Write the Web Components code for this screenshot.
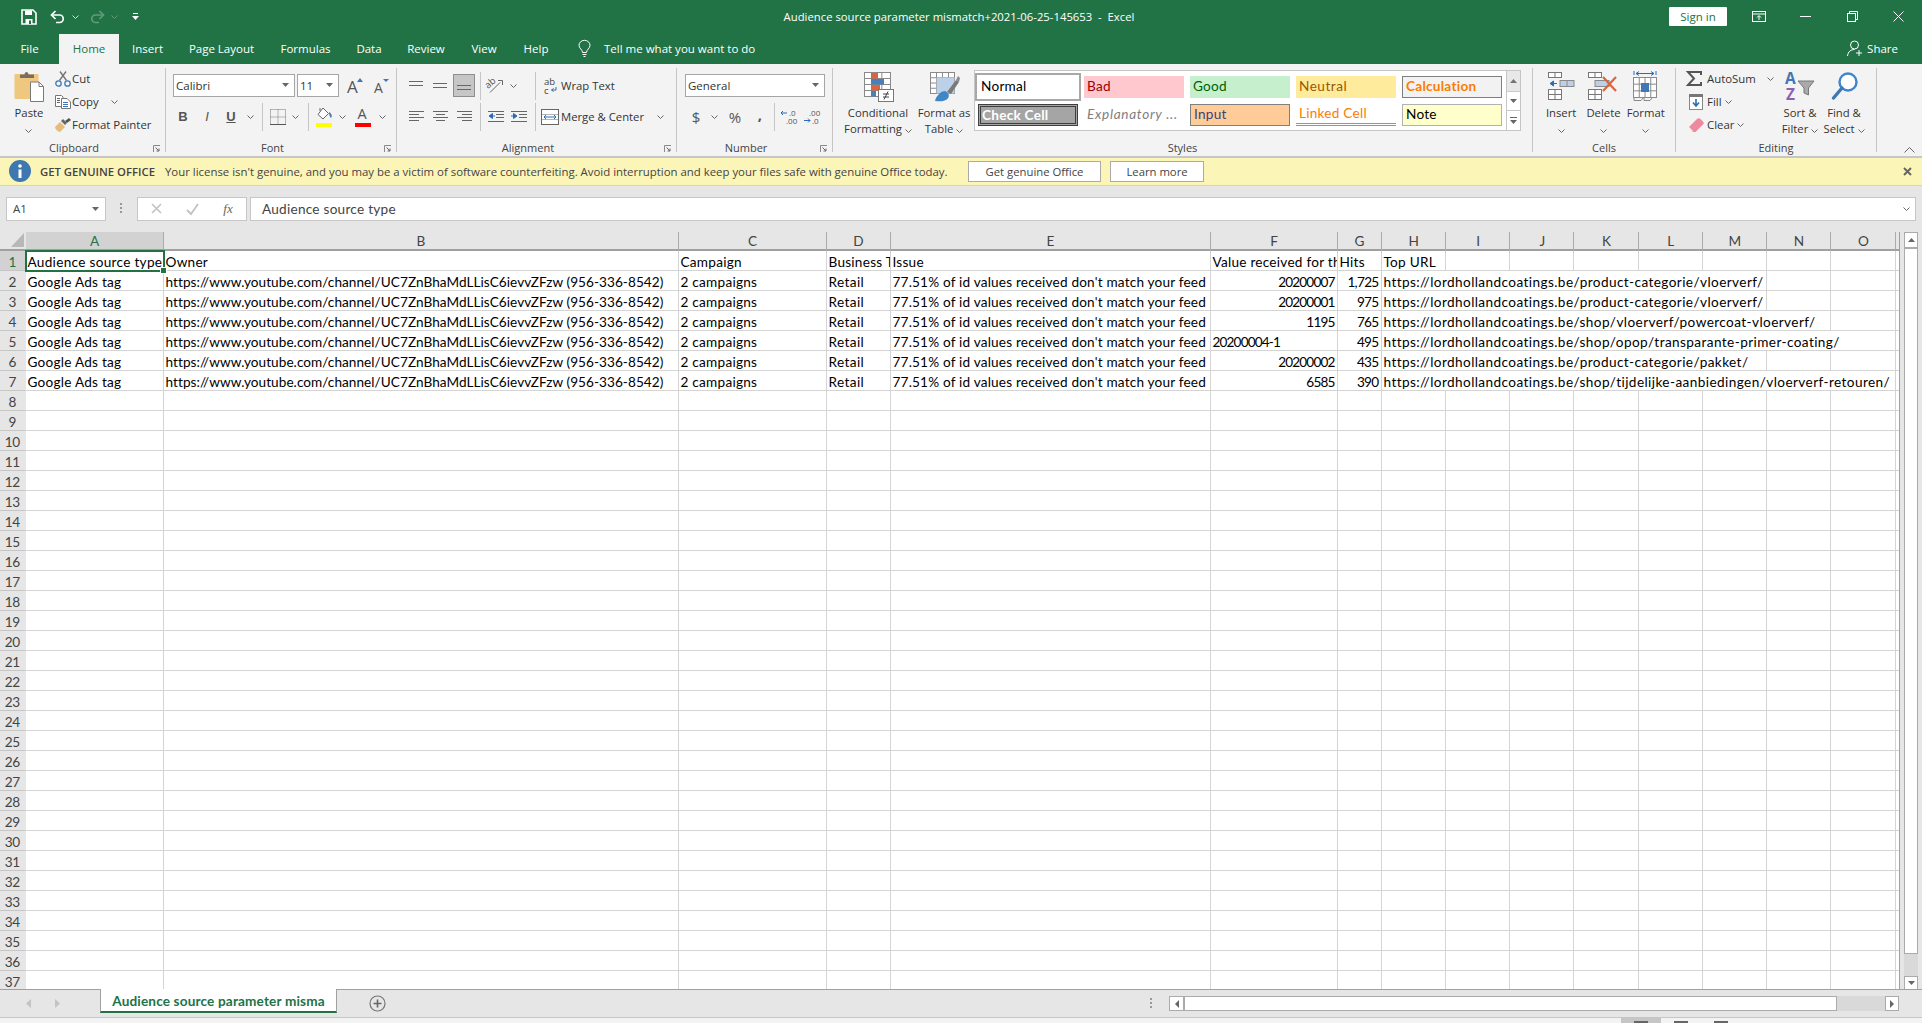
<!DOCTYPE html>
<html>
<head>
<meta charset="utf-8">
<title>Excel</title>
<style>
:root { --ui: "Open Sans", "Noto Sans", sans-serif; --cell: Lato, "Liberation Sans", sans-serif; --green: #217346; }
html, body { margin: 0; height: 100%; overflow: hidden; background: #e6e6e6; }
body { font: 11.5px var(--ui); color: #333; }
</style>
</head>
<body>
<xl-app></xl-app>
<script>
// every icon is [width, height, svg content]
const L = (x1, y1, x2, y2, c = "#666", w = 1) => `<line x1="${x1}" y1="${y1}" x2="${x2}" y2="${y2}" stroke="${c}" stroke-width="${w}"/>`;
const lines = (rows) => rows.map(([x1, x2, y, c]) => L(x1, y + .5, x2, y + .5, c || "#666")).join("");
const gridBox = (x, y, w, h, cols, rows, c = "#777") => {
  let s = `<rect x="${x + .5}" y="${y + .5}" width="${w - 1}" height="${h - 1}" fill="#fff" stroke="${c}"/>`;
  for (let i = 1; i < cols; i++) s += L(x + .5 + i * (w - 1) / cols, y, x + .5 + i * (w - 1) / cols, y + h, c);
  for (let i = 1; i < rows; i++) s += L(x, y + .5 + i * (h - 1) / rows, x + w, y + .5 + i * (h - 1) / rows, c);
  return s;
};
const ICONS = {
  chev: [7, 4, `<path d="M.5 .5 3.5 3.5 6.5 .5" fill="none" stroke="#666"/>`],
  tri: [8, 4, `<path d="M0 0H8L4 4Z" fill="#555"/>`],
  save: [16, 16, `<path d="M1 1H12L15 4V15H1Z" fill="none" stroke="#fff" stroke-width="1.6"/><path d="M4 1.5H11V6H4ZM4.5 10H11.5V15H4.5Z" fill="#fff"/><rect x="8" y="11.5" width="2" height="3.5" fill="#217346"/>`],
  undo: [15, 14, `<path d="M5.5 1 1.5 5 5.5 9" fill="none" stroke="#fff" stroke-width="1.7"/><path d="M2 5H9.5A3.7 3.7 0 0 1 9.5 12.5H6" fill="none" stroke="#fff" stroke-width="1.7"/>`],
  redo: [15, 14, `<path d="M9.5 1 13.5 5 9.5 9" fill="none" stroke="#5f9c7c" stroke-width="1.7"/><path d="M13 5H5.5A3.7 3.7 0 0 0 5.5 12.5H9" fill="none" stroke="#5f9c7c" stroke-width="1.7"/>`],
  chevw: [7, 4, `<path d="M.5 .5 3.5 3.5 6.5 .5" fill="none" stroke="#cfe3d8"/>`],
  chevd: [7, 4, `<path d="M.5 .5 3.5 3.5 6.5 .5" fill="none" stroke="#5f9c7c"/>`],
  qat: [7, 8, `<path d="M1 .5H6" stroke="#fff"/><path d="M0 3H7L3.5 7Z" fill="#fff"/>`],
  display: [14, 11, `<rect x=".5" y=".5" width="13" height="10" fill="none" stroke="#fff"/><path d="M0 3H14" stroke="#fff"/><path d="M7 9V5M5 6.5 7 4.5 9 6.5" fill="none" stroke="#fff"/>`],
  min: [11, 1, `<rect width="11" height="1" fill="#fff"/>`],
  restore: [11, 11, `<rect x=".5" y="2.5" width="8" height="8" fill="none" stroke="#fff"/><path d="M2.5 2.5V.5H10.5V8.5H8.5" fill="none" stroke="#fff"/>`],
  close: [11, 11, `<path d="M.5 .5 10.5 10.5M10.5 .5 .5 10.5" stroke="#fff"/>`],
  bulb: [13, 17, `<path d="M4.5 12.5C4.5 9.5 1 8.5 1 5.3A5.5 5 0 0 1 12 5.3C12 8.5 8.5 9.5 8.5 12.5Z" fill="none" stroke="#fff"/><path d="M4.5 14.5H8.5M5.5 16.5H7.5" stroke="#fff"/>`],
  share: [16, 17, `<circle cx="7.5" cy="5" r="4" fill="none" stroke="#fff"/><path d="M.5 16C1 11.5 4 9.5 7.5 9.5" fill="none" stroke="#fff"/><path d="M12 10V16M9 13H15" stroke="#fff"/>`],
  paste: [30, 31, `<rect x=".5" y="3" width="24" height="25" rx="1" fill="#edc87e"/><path d="M6 7V3.5H10.5C10.5 0 14.5 0 14.5 3.5H20V7Z" fill="#7b6d60"/><path d="M16.5 11H25L29.5 15.5V30.5H16.5Z" fill="#fff" stroke="#7a7a7a"/><path d="M25 11V15.5H29.5" fill="none" stroke="#7a7a7a"/>`],
  cut: [16, 16, `<path d="M4.5 9.5 11 .5M11.5 9.5 5 .5" stroke="#777" stroke-width="1.4"/><circle cx="3.5" cy="12.5" r="2.7" fill="none" stroke="#3f78b5" stroke-width="1.3"/><circle cx="12.5" cy="12.5" r="2.7" fill="none" stroke="#3f78b5" stroke-width="1.3"/>`],
  copy: [16, 14, `<path d="M.5 .5H6.5L8 2V11.5H.5Z" fill="#fff" stroke="#777"/><path d="M6.5 3.5H12L15.5 7V13.5H6.5Z" fill="#fff" stroke="#777"/>` + lines([[2, 5, 3], [2, 5, 5], [2, 5, 7], [8, 13, 7, "#3f78b5"], [8, 13, 9, "#3f78b5"], [8, 13, 11, "#3f78b5"]])],
  painter: [16, 14, `<path d="M0 9 5 4 10 9 5 14C3 14 0 11 0 9Z" fill="#e5bd78"/><path d="M6 3 8 1 12 5 10 7Z" fill="#666"/><path d="M10 3 14 0 16 2 12 5Z" fill="#555"/>`],
  grow: [17, 16, `<text x="0" y="15" font-size="17" fill="#555">A</text><path d="M10 4 13 0 16 4Z" fill="#3f78b5"/>`],
  shrink: [17, 16, `<text x="1" y="15" font-size="14" fill="#555">A</text><path d="M10 1H16L13 4Z" fill="#3f78b5"/>`],
  border: [16, 16, `<path d="M.5 .5H15.5V15.5M.5 .5V15.5M8 .5V15.5M.5 8H15.5" fill="none" stroke="#777" stroke-dasharray="1 1"/><path d="M0 15.5H16" stroke="#555"/>`],
  fill: [17, 17, `<path d="M7 1 12.5 6.5 7 12 2 7.5Z" fill="#fff" stroke="#666"/><path d="M13 5C15.5 6.5 16.5 9 15 11 13.5 9.5 13 7 13 5Z" fill="#3f78b5"/><path d="M4 1V4" stroke="#666"/>`],
  acolor: [16, 17, `<text x="2.5" y="12" font-size="14.5" fill="#555">A</text>`],
  atop: [14, 12, lines([[0, 14, 1], [0, 14, 5]])],
  amid: [14, 12, lines([[0, 14, 3], [0, 14, 7]])],
  abot: [14, 12, lines([[0, 14, 5], [0, 14, 9]])],
  aleft: [15, 12, lines([[0, 15, 0], [0, 10, 3], [0, 15, 6], [0, 10, 9]])],
  acenter: [15, 12, lines([[0, 15, 0], [3, 12, 3], [0, 15, 6], [3, 12, 9]])],
  aright: [15, 12, lines([[0, 15, 0], [5, 15, 3], [0, 15, 6], [5, 15, 9]])],
  outdent: [16, 12, lines([[0, 16, 0], [8, 16, 3], [8, 16, 6], [0, 16, 10]]) + `<path d="M7 5H3M4.5 2.5 1 5 4.5 7.5Z" fill="#2a6db0" stroke="#2a6db0"/>`],
  indent: [16, 12, lines([[0, 16, 0], [8, 16, 3], [8, 16, 6], [0, 16, 10]]) + `<path d="M0 5H4M2.5 2.5 6 5 2.5 7.5Z" fill="#2a6db0" stroke="#2a6db0"/>`],
  orient: [17, 15, `<text transform="translate(1 11) rotate(-40)" font-size="9.5" fill="#555">ab</text><path d="M3 14.5 13 4.5" stroke="#666"/><path d="M11 2.5H15.5V7" fill="none" stroke="#666"/>`],
  wrap: [15, 17, `<text x="1" y="8" font-size="9.5" fill="#444">ab</text><text x="1" y="16.5" font-size="9.5" fill="#444">c</text><path d="M13 10V13H8.5M10.5 11.5 8.5 13 10.5 14.5" fill="none" stroke="#2a6db0"/>`],
  merge: [18, 16, gridBox(0, 0, 18, 16, 1, 3, "#666") + `<rect x="1" y="5.5" width="16" height="5" fill="#fff"/><path d="M3 8H15M5 6 3 8 5 10M13 6 15 8 13 10" fill="none" stroke="#2a6db0"/>`],
  decinc: [20, 15, `<text x="9" y="7" font-size="8" fill="#555">.0</text><text x="6" y="14.5" font-size="8" fill="#555">.00</text><path d="M7 4H1M3 2 1 4 3 6" fill="none" stroke="#2a6db0"/>`],
  decdec: [20, 15, `<text x="6" y="7" font-size="8" fill="#555">.00</text><text x="9" y="14.5" font-size="8" fill="#555">.0</text><path d="M1 11.5H7M5 9.5 7 11.5 5 13.5" fill="none" stroke="#2a6db0"/>`],
  launch: [7, 7, `<path d="M.5 7V.5H7" fill="none" stroke="#888"/><path d="M2.5 2.5 6 6M6 3.5V6H3.5" fill="none" stroke="#666"/>`],
  cf: [31, 31, gridBox(1, 1, 27, 25, 3, 4, "#8a8a8a") + `<rect x="8" y="2" width="7" height="5.5" fill="#d9643e"/><rect x="8" y="8" width="13" height="5.5" fill="#4a7fba"/><rect x="8" y="14" width="9" height="5.5" fill="#d9643e"/><rect x="8" y="20" width="5" height="5.5" fill="#4a7fba"/><rect x="15.5" y="18.5" width="15" height="12" fill="#fff" stroke="#777"/>` + L(20, 23, 26, 23, "#444") + L(20, 26, 26, 26, "#444") + L(21, 28.5, 25, 20.5, "#444")],
  table: [31, 31, gridBox(1, 1, 25, 22, 4, 4, "#8a8a8a") + `<rect x="7.5" y="6.5" width="18" height="16" fill="#bcd0e8"/><path d="M18 21 27 9 30 11 22 23Z" fill="#7a7a7a"/><path d="M27 9 29 5 31 7 30 11Z" fill="#8a8a8a"/><path d="M6 30C7 25 12 20 16 20 21 22 21 27 17 29 13 31 9 30 6 30Z" fill="#3f86c8"/>`],
  ins: [26, 28, gridBox(0, 0, 14, 6, 2, 1) + gridBox(0, 17, 14, 11, 2, 2) + `<rect x="12" y="8.5" width="14" height="6" fill="#bcd0e8" stroke="#8a8a8a"/>` + L(19, 8, 19, 15, "#8a8a8a") + `<path d="M9 11.5H3M5.5 9 2 11.5 5.5 14Z" fill="#2a6db0" stroke="#2a6db0"/>`],
  del: [30, 28, gridBox(0, 0, 14, 6, 2, 1) + gridBox(0, 17, 14, 11, 2, 2) + `<rect x="7" y="8.5" width="14" height="6" fill="#bcd0e8" stroke="#8a8a8a"/>` + `<path d="M15 5 28 19M28 5 15 19" stroke="#d9643e" stroke-width="2.2"/>`],
  format: [25, 31, L(1, 0, 1, 4, "#2a6db0") + L(23, 0, 23, 4, "#2a6db0") + `<path d="M3 2.5H21M6 .5 3 2.5 6 4.5M18 .5 21 2.5 18 4.5" fill="none" stroke="#2a6db0"/>` + gridBox(0, 6, 24, 21, 4, 3, "#8a8a8a") + `<rect x="8" y="12" width="8" height="9" fill="#3f78b5"/><path d="M1 27V29.5H8L10 27M11 27V29.5H17L19 27" fill="none" stroke="#8a8a8a"/>`],
  sigma: [16, 15, `<path d="M15 4V1H2L8 7.5 2 14H15V11" fill="none" stroke="#555" stroke-width="2"/>`],
  filld: [14, 16, `<rect x=".5" y=".5" width="13" height="15" fill="#fff" stroke="#888"/><rect x="0" y="0" width="14" height="3" fill="#777"/><path d="M7 5V12M4 8.5 7 12 10 8.5" fill="none" stroke="#2a6db0" stroke-width="1.6"/>`],
  clear: [15, 14, `<path d="M0 9 8 1C9 0 10.5 0 11.5 1L14 3.5C15 4.5 15 5.5 14 6.5L6.5 14H4Z" fill="#ee8aa0"/><path d="M0 9 4 13" stroke="#f6c3ce"/>`],
  sort: [31, 31, `<text x="0" y="13" font-size="15.5" font-weight="700" fill="#3f78b5">A</text><text x="1" y="29" font-size="15.5" font-weight="700" fill="#8f5fb3">Z</text><path d="M13 10H29L23.5 17V24L19 22V17Z" fill="#aaa" stroke="#777"/>`],
  find: [27, 31, `<circle cx="17" cy="11" r="8.5" fill="#fff" stroke="#3f86c8" stroke-width="2.4"/><path d="M11 17 2.5 27" stroke="#3f78b5" stroke-width="3.4" stroke-linecap="round"/>`],
  info: [22, 22, `<circle cx="11" cy="11" r="11" fill="#3f78b0"/><rect x="9.5" y="9.5" width="3" height="8.5" fill="#fff"/><circle cx="11" cy="6" r="1.8" fill="#fff"/>`],
  xgray: [9, 9, `<path d="M1 1 8 8M8 1 1 8" stroke="#666" stroke-width="2"/>`],
  cancel: [11, 11, `<path d="M1 1 10 10M10 1 1 10" stroke="#c2c2c2" stroke-width="1.6"/>`],
  enter: [13, 12, `<path d="M1 7 5 11 12 1" fill="none" stroke="#c2c2c2" stroke-width="1.8"/>`],
  corner: [13, 14, `<path d="M13 0V14H0Z" fill="#b8b8b8"/>`],
  dots: [3, 11, `<path d="M0 1H2M0 5H2M0 9H2" stroke="#999" stroke-width="2"/>`],
  up: [7, 4, `<path d="M3.5 0 7 4H0Z" fill="#666"/>`],
  down: [7, 4, `<path d="M0 0H7L3.5 4Z" fill="#666"/>`],
  navl: [5, 9, `<path d="M5 0V9L0 4.5Z" fill="#c4c4c4"/>`],
  navr: [5, 9, `<path d="M0 0V9L5 4.5Z" fill="#c4c4c4"/>`],
  left: [4, 8, `<path d="M4 0V8L0 4Z" fill="#666"/>`],
  right: [4, 8, `<path d="M0 0V8L4 4Z" fill="#666"/>`],
  add: [17, 17, `<circle cx="8.5" cy="8.5" r="7.5" fill="none" stroke="#777" stroke-width="1.2"/><path d="M4.5 8.5H12.5M8.5 4.5V12.5" stroke="#666" stroke-width="1.6"/>`],
  collapse: [11, 6, `<path d="M.5 5.5 5.5 .5 10.5 5.5" fill="none" stroke="#666"/>`]
};

class XlBase extends HTMLElement {
  connectedCallback() {
    if (this.shadowRoot) return;
    this.attachShadow({ mode: "open" });
    this.shadowRoot.innerHTML = `<style>${this.constructor.css}</style>${this.render()}`;
  }
}

class XlIcon extends XlBase {
  static css = `:host { display: inline-flex; line-height: 0; } svg { display: block; overflow: visible; }`;
  render() {
    const [w, h, body] = ICONS[this.getAttribute("name")];
    return `<svg width="${w}" height="${h}" viewBox="0 0 ${w} ${h}" xmlns="http://www.w3.org/2000/svg">${body}</svg>`;
  }
}

class XlTitlebar extends XlBase {
  static css = `
    :host { display: grid; grid-template-columns: 640px 640px 642px; height: 34px; align-items: center; color: #fff; background: var(--green); }
    .qat { display: grid; grid-template-columns: 16px 13px 15px 20px 4px 16px 18px 7px 10px; padding-left: 21px; align-items: center; justify-items: center; }
    .title { text-align: center; font-size: 11.3px; white-space: pre; padding-right: 2px; }
    .win { display: flex; justify-content: flex-end; align-items: center; }
    .sign { width: 58px; height: 19px; line-height: 19px; text-align: center; background: #fff; color: var(--green); border-radius: 1px; font-size: 11.5px; margin-right: 9px; }
    .win span { width: 46.5px; display: flex; justify-content: center; }
  `;
  render() {
    return `
      <div class="qat"><xl-icon name="save"></xl-icon><span></span><xl-icon name="undo"></xl-icon><xl-icon name="chevw"></xl-icon><span></span><xl-icon name="redo"></xl-icon><xl-icon name="chevd"></xl-icon><span></span><xl-icon name="qat"></xl-icon></div>
      <div class="title">Audience source parameter mismatch+2021-06-25-145653  -  Excel</div>
      <div class="win"><div class="sign">Sign in</div><span><xl-icon name="display"></xl-icon></span><span><xl-icon name="min"></xl-icon></span><span><xl-icon name="restore"></xl-icon></span><span><xl-icon name="close"></xl-icon></span></div>`;
  }
}

class XlTabs extends XlBase {
  static css = `
    :host { display: flex; height: 30px; line-height: 30px; background: var(--green); color: #fff; font-size: 11.5px; }
    .tab { text-align: center; }
    .on { background: #f3f3f3; color: var(--green); }
    .tell { display: flex; align-items: center; gap: 13px; margin-left: 16px; }
    .share { margin-left: auto; margin-right: 24px; display: flex; align-items: center; gap: 4px; }
  `;
  render() {
    const tabs = [["File", 59], ["Home", 60], ["Insert", 57], ["Page Layout", 91], ["Formulas", 77], ["Data", 50], ["Review", 64], ["View", 52], ["Help", 52]];
    return tabs.map(([t, w]) => `<div class="tab ${t === "Home" ? "on" : ""}" style="width:${w}px">${t}</div>`).join("") +
      `<div class="tell"><xl-icon name="bulb"></xl-icon><span>Tell me what you want to do</span></div>
       <div class="share"><xl-icon name="share"></xl-icon><span>Share</span></div>`;
  }
}

class XlGroup extends XlBase {
  static css = `
    :host { display: flex; flex-direction: column; box-sizing: border-box; height: 84px; border-right: 1px solid #c6c6c6; flex: none; }
    .body { height: 74px; }
    .foot { display: flex; height: 10px; line-height: 12px; font-size: 11px; color: #444; }
    .foot div { flex: 1; text-align: center; }
    .foot span { width: 17px; display: flex; justify-content: center; align-items: flex-start; padding-top: 3px; }
  `;
  render() {
    const launch = this.hasAttribute("launcher") ? `<span><xl-icon name="launch"></xl-icon></span>` : "";
    return `<div class="body"><slot></slot></div><div class="foot"><div>${this.getAttribute("label")}</div>${launch}</div>`;
  }
}

class XlBig extends XlBase {
  static css = `
    :host { display: flex; flex-direction: column; align-items: center; flex: none; line-height: 16px; white-space: nowrap; text-align: center; color: #333; font-size: 11.3px; }
    .ic { height: 37px; display: flex; align-items: center; justify-content: center; }
  `;
  render() {
    return `<div class="ic"><xl-icon name="${this.getAttribute("icon")}"></xl-icon></div><div><slot></slot></div>`;
  }
}

class XlStyle extends XlBase {
  static css = `
    :host { display: block; height: 22px; box-sizing: border-box; padding-left: 3px; font: 13.6px/21px var(--cell); letter-spacing: .25px; white-space: nowrap; overflow: hidden; }
  `;
  render() { return `<slot></slot>`; }
}

class XlRibbon extends XlBase {
  static css = `
    :host { display: flex; height: 92px; box-sizing: content-box; background: #f3f3f3; border-bottom: 2px solid #c6c6c6; padding: 0; }
    .groups { display: flex; margin-top: 4px; height: 84px; }
    .flex { display: flex; }
    .list { display: grid; grid-auto-rows: 22px; row-gap: 1px; }
    .act { display: grid; align-items: center; justify-items: start; font-size: 11.4px; color: #333; white-space: nowrap; }
    .act > xl-icon:first-child { justify-self: center; }
    .act > xl-icon[name=chev] { justify-self: center; }
    .two { display: grid; grid-auto-rows: 22px; row-gap: 9px; padding-top: 7px; }
    .row { display: grid; grid-template-rows: 22px; align-items: center; justify-items: center; height: 22px; white-space: nowrap; }
    .row > span.t { justify-self: start; font-size: 11.3px; }
    .sep { width: 1px; height: 28px; background: #c6c6c6; align-self: center; }
    .combo { box-sizing: border-box; height: 23px; background: #fff; border: 1px solid #a6a6a6; display: flex; align-items: center; justify-content: space-between; padding: 0 5px 1px 2px; font-size: 11.5px; color: #333; }
    .slotc { display: flex; justify-content: center; }
    .sel { box-sizing: border-box; width: 22px; height: 23px; background: #c6c6c6; border: 1px solid #8f8f8f; display: flex; align-items: center; justify-content: center; }
    .gly { font-size: 13px; color: #555; font-weight: 700; font-family: "Liberation Sans", sans-serif; }
    .bar { display: flex; flex-direction: column; align-items: center; gap: 1px; }
    .bar i { display: block; width: 16px; height: 4px; margin-top: -2px; }
    .gallery { display: flex; box-sizing: border-box; width: 547px; height: 61px; margin-top: 2px; background: #fff; border: 1px solid #c6c6c6; }
    .cells { display: grid; grid-template-columns: repeat(5, 100px); grid-auto-rows: 22px; gap: 6px; padding: 5px 0 0 3px; }
    .scroll { display: grid; grid-template-rows: 21px 19px 19px; margin-left: 4px; width: 14px; border-left: 1px solid #c6c6c6; }
    .scroll div { display: flex; align-items: center; justify-content: center; border-bottom: 1px solid #c6c6c6; flex-direction: column; gap: 1px; }
    .scroll .off { background: #e6e6e6; opacity: .9; }
    .normal { margin: -3px; height: 28px; width: 106px; border: 2px solid #a8a8a8; line-height: 23px; padding-left: 4px; box-shadow: inset 0 0 0 1px #fff; }
    .end { flex: 1; display: flex; align-items: flex-end; justify-content: flex-end; padding: 0 7px 3px 0; }
  `;
  render() {
    const act = (cols, icon, text, chev) => `<div class="act" style="grid-template-columns:${cols}"><xl-icon name="${icon}"></xl-icon><span>${text}</span>${chev ? `<xl-icon name="chev"></xl-icon>` : ""}</div>`;
    const chev = `<xl-icon name="chev"></xl-icon>`;
    const sep = `<div class="sep"></div>`;
    const ic = (n) => `<xl-icon name="${n}"></xl-icon>`;
    return `<div class="groups">
      <xl-group label="Clipboard" launcher style="width:166px">
        <div class="flex">
          <xl-big icon="paste" style="width:50px;margin-left:4px">Paste<br>${chev}</xl-big>
          <div class="list">
            ${act("18px auto", "cut", "Cut")}
            ${act("18px 36px 12px", "copy", "Copy", 1)}
            ${act("18px auto", "painter", "Format Painter")}
          </div>
        </div>
      </xl-group>
      <xl-group label="Font" launcher style="width:231px">
        <div class="two" style="padding-left:5px">
          <div class="row" style="grid-template-columns:122px 44px 32px 20px;justify-items:stretch;margin-left:2px">
            <div class="combo"><span>Calibri</span>${ic("down")}</div>
            <div class="combo" style="margin-left:2px"><span>11</span>${ic("down")}</div>
            <div class="slotc">${ic("grow")}</div>
            <div class="slotc">${ic("shrink")}</div>
          </div>
          <div class="row" style="grid-template-columns:24px 24px 24px 14px 10px 21px 15px 10px 22px 14px 28px 10px">
            <span class="gly">B</span><span class="gly" style="font-style:italic;font-weight:400">I</span><span class="gly" style="text-decoration:underline">U</span>${chev}${sep}${ic("border")}${chev}${sep}
            <span class="bar">${ic("fill")}<i style="background:#ffff00"></i></span>${chev}<span class="bar">${ic("acolor")}<i style="background:#ff0000"></i></span>${chev}
          </div>
        </div>
      </xl-group>
      <xl-group label="Alignment" launcher style="width:280px">
        <div class="two" style="padding-left:7px">
          <div class="row" style="grid-template-columns:24px 24px 24px 8px 23px 12px 11px 10px 20px auto">
            ${ic("atop")}${ic("amid")}<div class="sel">${ic("abot")}</div>${sep}${ic("orient")}${chev}<span></span>${sep}${ic("wrap")}<span class="t" style="padding-left:1px">Wrap Text</span>
          </div>
          <div class="row" style="grid-template-columns:24px 24px 24px 8px 23px 23px 10px 20px 91px 18px">
            ${ic("aleft")}${ic("acenter")}${ic("aright")}${sep}${ic("outdent")}${ic("indent")}${sep}${ic("merge")}<span class="t" style="padding-left:1px">Merge &amp; Center</span>${chev}
          </div>
        </div>
      </xl-group>
      <xl-group label="Number" launcher style="width:156px">
        <div class="two" style="padding-left:8px">
          <div class="row" style="grid-template-columns:140px;justify-items:stretch"><div class="combo"><span>General</span>${ic("down")}</div></div>
          <div class="row" style="grid-template-columns:22px 14px 28px 20px 11px 20px 25px">
            <span style="font-size:15px;color:#555">$</span>${chev}<span style="font-size:15px;color:#555">%</span><span style="font-size:15px;font-weight:700;color:#555;padding:0 0 5px 2px">,</span>${sep}${ic("decinc")}${ic("decdec")}
          </div>
        </div>
      </xl-group>
      <xl-group label="Styles" style="width:700px">
        <div class="flex" style="padding-left:1px">
          <xl-big icon="cf" style="width:88px">Conditional<br>Formatting ${chev}</xl-big>
          <xl-big icon="table" style="width:44px">Format as<br>Table ${chev}</xl-big>
          <div class="gallery" style="margin-left:8px">
            <div class="cells">
              <xl-style class="normal" style="color:#000;background:#fff">Normal</xl-style>
              <xl-style style="background:#ffc7ce;color:#9c0006">Bad</xl-style>
              <xl-style style="background:#c6efce;color:#006100">Good</xl-style>
              <xl-style style="background:#ffeb9c;color:#9c5700;letter-spacing:.5px">Neutral</xl-style>
              <xl-style style="background:#f2f2f2;color:#fa7d00;font-weight:700;border:1px solid #7f7f7f;line-height:19px">Calculation</xl-style>
              <xl-style style="background:#a5a5a5;color:#fff;font-weight:700;border:3px double #3f3f3f;line-height:16px;padding-left:1px">Check Cell</xl-style>
              <xl-style style="color:#7f7f7f;font-style:italic;letter-spacing:.7px">Explanatory ...</xl-style>
              <xl-style style="background:#ffcc99;color:#3f3f76;border:1px solid #7f7f7f;line-height:19px">Input</xl-style>
              <xl-style style="color:#fa7d00;border-bottom:3px double #fa7d00;line-height:19px">Linked Cell</xl-style>
              <xl-style style="background:#ffffcc;color:#000;border:1px solid #b2b2b2;line-height:19px">Note</xl-style>
            </div>
            <div class="scroll">
              <div class="off">${ic("up")}</div>
              <div>${ic("down")}</div>
              <div style="border:0">
                <svg width="7" height="7"><path d="M0 .5H7" stroke="#666"/><path d="M0 3H7L3.5 7Z" fill="#666"/></svg>
              </div>
            </div>
          </div>
        </div>
      </xl-group>
      <xl-group label="Cells" style="width:143px">
        <div class="flex" style="padding-left:7px">
          <xl-big icon="ins" style="width:42.3px">Insert<br>${chev}</xl-big>
          <xl-big icon="del" style="width:42.3px">Delete<br>${chev}</xl-big>
          <xl-big icon="format" style="width:42.3px">Format<br>${chev}</xl-big>
        </div>
      </xl-group>
      <xl-group label="Editing" style="width:201px">
        <div class="flex" style="padding-left:9px">
          <div class="list" style="width:93px">
            ${act("18px 62px 11px", "sigma", `<span style="padding-left:4px">AutoSum</span>`, 1)}
            ${act("22px 15px 12px", "filld", "Fill", 1)}
            ${act("22px 27px 12px", "clear", "Clear", 1)}
          </div>
          <xl-big icon="sort" style="width:44px">Sort &amp;<br>Filter ${chev}</xl-big>
          <xl-big icon="find" style="width:44px">Find &amp;<br>Select ${chev}</xl-big>
        </div>
      </xl-group>
    </div>
    <div class="end">${ic("collapse")}</div>`;
  }
}

class XlNotice extends XlBase {
  static css = `
    :host { display: flex; align-items: center; height: 27px; background: #fcf5b8; border-bottom: 1px solid #dfd98e; font-size: 11.4px; color: #444; white-space: nowrap; }
    xl-icon { margin-left: 9px; margin-right: 9px; }
    b { width: 125px; font-weight: 600; font-size: 11.3px; flex: none; }
    .msg { width: 803px; flex: none; }
    .btn { box-sizing: border-box; height: 21px; line-height: 19px; background: #fff; border: 1px solid #ababab; text-align: center; flex: none; font-size: 11.3px; }
    .x { margin-left: auto; }
    .x xl-icon { margin: 0 10px 0 0; }
  `;
  render() {
    return `<xl-icon name="info"></xl-icon><b>GET GENUINE OFFICE</b>
      <span class="msg">Your license isn't genuine, and you may be a victim of software counterfeiting. Avoid interruption and keep your files safe with genuine Office today.</span>
      <div class="btn" style="width:133px;margin-right:9px">Get genuine Office</div><div class="btn" style="width:94px">Learn more</div>
      <div class="x"><xl-icon name="xgray"></xl-icon></div>`;
  }
}

class XlFormula extends XlBase {
  static css = `
    :host { display: flex; height: 46px; box-sizing: border-box; padding: 11px 6px 11px 6px; background: #e6e6e6; color: #444; }
    .box { box-sizing: border-box; height: 24px; background: #fff; border: 1px solid #c6c6c6; display: flex; align-items: center; flex: none; }
    .name { width: 100px; justify-content: space-between; padding: 0 6px; font-size: 11.5px; }
    .dots { width: 31px; display: flex; justify-content: center; align-items: center; }
    .fns { width: 110px; display: grid; grid-template-columns: 36px 36px 36px; justify-items: center; margin-right: 3px; }
    .fx { font: italic 13px "Liberation Serif", serif; color: #666; }
    .input { flex: 1; padding: 0 5px 0 11px; justify-content: space-between; font: 13.6px var(--cell); letter-spacing: .25px; color: #444; }
  `;
  render() {
    return `<div class="box name"><span>A1</span><xl-icon name="down"></xl-icon></div>
      <div class="dots"><xl-icon name="dots"></xl-icon></div>
      <div class="box fns"><xl-icon name="cancel"></xl-icon><xl-icon name="enter"></xl-icon><span class="fx">fx</span></div>
      <div class="box input"><span>Audience source type</span><xl-icon name="chev"></xl-icon></div>`;
  }
}

class XlSheet extends XlBase {
  static css = `
    :host { display: flex; height: 758px; background: #e6e6e6; overflow: hidden; }
    .grid { display: grid; flex: none; width: 1900px; height: 758px; overflow: hidden; background: #fff; box-sizing: border-box; border-right: 1px solid #a0a0a0;
      grid-template-columns: 25.5px 138px 515px 148px 64px 320px 127px 44px 64.5px 64.2px 64.2px 64.2px 64.2px 64.2px 64.2px 64.4px 4px;
      grid-template-rows: 19px repeat(37, 20px); font: 13.6px/23px var(--cell); letter-spacing: .25px; color: #000; }
    .grid > div { box-sizing: border-box; white-space: nowrap; overflow: hidden; border-right: 1px solid #d4d4d4; border-bottom: 1px solid #d4d4d4; padding: 0 2px; }
    .grid > .hc { background: #e6e6e6; color: #444; text-align: center; border-right: 1px solid #ababab; border-bottom: 2px solid #a0a0a0; line-height: 18px; padding: 0 0 0 1px; letter-spacing: 0; }
    .grid > .hr { background: #e6e6e6; color: #444; text-align: center; padding: 0; border-right: 1px solid #e6e6e6; border-bottom: 1px solid #c6c6c6; letter-spacing: -.4px; }
    .grid > .corner { display: flex; justify-content: flex-end; align-items: flex-end; padding: 0 2px 2px 0; border-right: 0; }
    .grid > .hot { background: #d2d2d2; color: var(--green); }
    .grid > .num { text-align: right; padding-right: 2px; letter-spacing: -.85px; }
    .grid > .val { letter-spacing: -.85px; }
    .grid > .hits { letter-spacing: -.7px; }
    .grid > .own { letter-spacing: .05px; }
    .grid > .iss { letter-spacing: .19px; }
    .grid > .url { letter-spacing: .41px; }
    .grid > .ret { letter-spacing: .4px; }
    .grid > .sel { overflow: visible; position: relative; z-index: 2; border: 0; outline: 2px solid var(--green); outline-offset: -1px; line-height: 22px; letter-spacing: .3px; }
    .sel::after { content: ""; position: absolute; right: -3px; bottom: -3px; width: 5px; height: 5px; background: var(--green); border: 1px solid #fff; }
    .vbar { display: grid; grid-template-rows: 16px 706px 22px 14px; width: 14px; margin-left: 4px; }
    .vbar div { box-sizing: border-box; background: #fff; border: 1px solid #ababab; display: flex; align-items: center; justify-content: center; }
    .vbar .track { background: #d9d9d9; border: 0; }
  `;
  render() {
    const cols = ["A", "B", "C", "D", "E", "F", "G", "H", "I", "J", "K", "L", "M", "N", "O", ""];
    const owner = "https://www.youtube.com/channel/UC7ZnBhaMdLLisC6ievvZFzw (956-336-8542)";
    const issue = "77.51% of id values received don't match your feed";
    const rows = [
      ["20200007", "1,725", "https://lordhollandcoatings.be/product-categorie/vloerverf/", 6],
      ["20200001", "975", "https://lordhollandcoatings.be/product-categorie/vloerverf/", 6],
      ["1195", "765", "https://lordhollandcoatings.be/shop/vloerverf/powercoat-vloerverf/", 7],
      ["20200004-1", "495", "https://lordhollandcoatings.be/shop/opop/transparante-primer-coating/", 8],
      ["20200002", "435", "https://lordhollandcoatings.be/product-categorie/pakket/", 6],
      ["6585", "390", "https://lordhollandcoatings.be/shop/tijdelijke-aanbiedingen/vloerverf-retouren/", 8]
    ];
    let html = `<div class="hc corner"><xl-icon name="corner"></xl-icon></div>`;
    cols.forEach((c, i) => { html += `<div class="hc ${i === 0 ? "hot" : ""}">${c}</div>`; });
    const blank = (n) => "<div></div>".repeat(n);
    html += `<div class="hr hot">1</div><div class="sel">Audience source type</div><div>Owner</div><div>Campaign</div><div>Business T</div><div>Issue</div><div>Value received for th</div><div>Hits</div><div>Top URL</div>${blank(8)}`;
    rows.forEach(([val, hits, url, span], i) => {
      const numeric = /^\d+$/.test(val);
      html += `<div class="hr">${i + 2}</div><div>Google Ads tag</div><div class="own">${owner}</div><div>2 campaigns</div><div class="ret">Retail</div><div class="iss">${issue}</div>
        <div class="${numeric ? "num" : "val"}">${val}</div><div class="num hits">${hits}</div><div class="url" style="grid-column:span ${span}">${url}</div>${blank(9 - span)}`;
    });
    for (let r = 8; r <= 37; r++) html += `<div class="hr">${r}</div>${blank(16)}`;
    return `<div class="grid">${html}</div>
      <div class="vbar"><div><xl-icon name="up"></xl-icon></div><div></div><div class="track"></div><div><xl-icon name="down"></xl-icon></div></div>`;
  }
}

class XlSheetbar extends XlBase {
  static css = `
    :host { display: flex; height: 29px; box-sizing: border-box; background: #e6e6e6; border-top: 1px solid #a0a0a0; border-bottom: 1px solid #c6c6c6; }
    .nav { display: grid; grid-template-columns: 29px 29px; width: 100px; padding-left: 14px; box-sizing: border-box; align-items: center; justify-items: center; height: 27px; }
    .tab { box-sizing: border-box; width: 237px; height: 24px; margin-top: -1px; padding-top: 1px; background: #fff; border-left: 1px solid #a0a0a0; border-right: 1px solid #a0a0a0; border-bottom: 2px solid var(--green); text-align: center; font: 700 13.6px/22px var(--cell); letter-spacing: .15px; color: var(--green); white-space: nowrap; }
    .add { margin-left: 32px; display: flex; align-items: center; height: 27px; }
    .split { margin-left: 764px; display: flex; align-items: center; height: 27px; }
    .hbar { margin-left: 16px; margin-top: 6px; height: 15px; width: 730px; display: grid; grid-template-columns: 15px 653px 48px 14px; box-sizing: border-box; }
    .hbar div { box-sizing: border-box; background: #fff; border: 1px solid #ababab; display: flex; align-items: center; justify-content: center; }
    .hbar .track { background: #d9d9d9; border: 0; }
  `;
  render() {
    return `<div class="nav"><xl-icon name="navl"></xl-icon><xl-icon name="navr"></xl-icon></div>
      <div class="tab">Audience source parameter misma</div>
      <div class="add"><xl-icon name="add"></xl-icon></div>
      <div class="split"><xl-icon name="dots"></xl-icon></div>
      <div class="hbar"><div><xl-icon name="left"></xl-icon></div><div></div><div class="track"></div><div><xl-icon name="right"></xl-icon></div></div>`;
  }
}

class XlStatusbar extends XlBase {
  static css = `
    :host { display: flex; height: 5px; background: #f3f3f3; overflow: hidden; padding-left: 1621px; }
    .v { width: 40px; height: 5px; display: flex; justify-content: center; padding-top: 3px; box-sizing: border-box; }
    .v i { display: block; width: 14px; height: 2px; background: #666; }
  `;
  render() {
    return `<div class="v" style="background:#c6c6c6"><i></i></div><div class="v"><i></i></div><div class="v"><i></i></div>`;
  }
}

class XlApp extends XlBase {
  static css = `:host { display: flex; flex-direction: column; width: 1922px; height: 1023px; overflow: hidden; }`;
  render() {
    return `<xl-titlebar></xl-titlebar><xl-tabs></xl-tabs><xl-ribbon></xl-ribbon><xl-notice></xl-notice><xl-formula></xl-formula><xl-sheet></xl-sheet><xl-sheetbar></xl-sheetbar><xl-statusbar></xl-statusbar>`;
  }
}

customElements.define("xl-icon", XlIcon);
customElements.define("xl-titlebar", XlTitlebar);
customElements.define("xl-tabs", XlTabs);
customElements.define("xl-group", XlGroup);
customElements.define("xl-big", XlBig);
customElements.define("xl-style", XlStyle);
customElements.define("xl-ribbon", XlRibbon);
customElements.define("xl-notice", XlNotice);
customElements.define("xl-formula", XlFormula);
customElements.define("xl-sheet", XlSheet);
customElements.define("xl-sheetbar", XlSheetbar);
customElements.define("xl-statusbar", XlStatusbar);
customElements.define("xl-app", XlApp);
</script>
</body>
</html>
